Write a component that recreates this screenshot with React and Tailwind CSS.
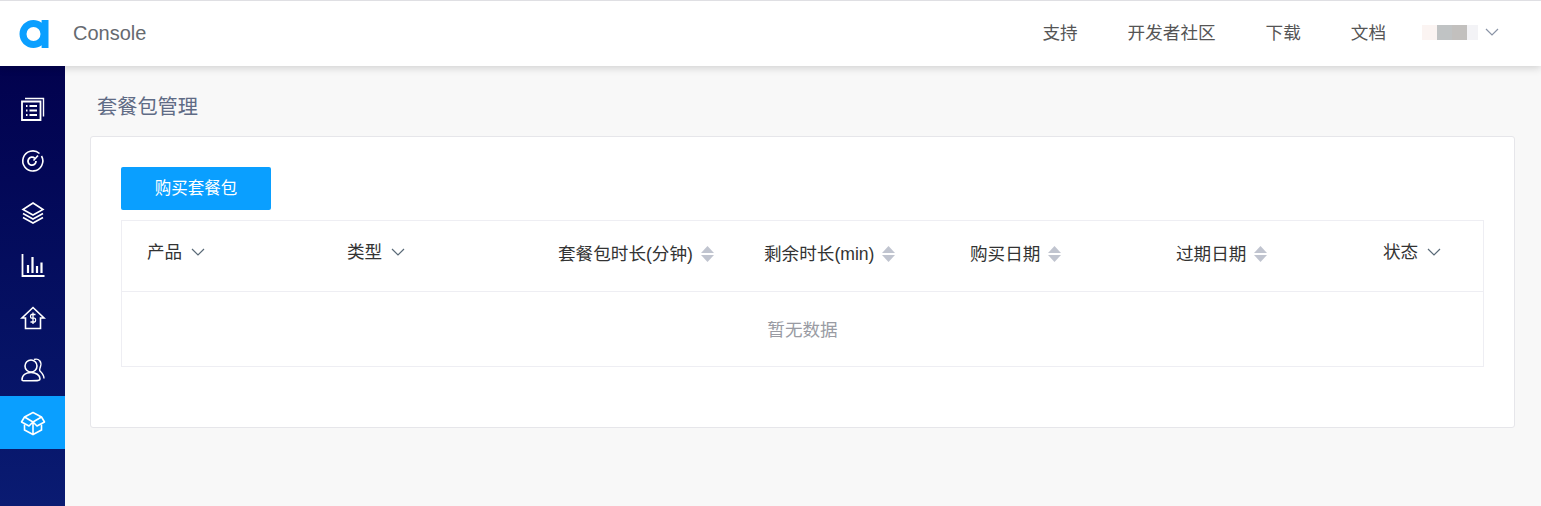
import React from "react";

const font = { fontFamily: '"Liberation Sans", "Noto Sans CJK SC", sans-serif' };

const Logo = () => (
  <svg width="32" height="32" viewBox="0 0 32 32" fill="#0a9fff">
    <path fillRule="evenodd" d="M15.5 3C18.5 3 21.3 4 23.6 5.8V2.9H30.5V31H23.6V28.2C21.3 30 18.5 31 15.5 31 7.8 31 1.5 24.7 1.5 17S7.8 3 15.5 3ZM15.5 10A7 7 0 1 0 15.5 24 7 7 0 1 0 15.5 10Z" />
  </svg>
);

const IconWrap = ({ children }) => (
  <svg width="26" height="26" viewBox="0 0 26 26" fill="none" stroke="white" strokeWidth="1.4">
    {children}
  </svg>
);

const navIcons = [
  <IconWrap key="list">
    <path d="M2 6.5H20.5V25H2Z" strokeWidth="1.8" />
    <path d="M5 3.5H23.5V21.5" />
    <path d="M6 11H7.5M9.5 11H17M6 15.5H7.5M9.5 15.5H17M6 20H7.5M9.5 20H17" strokeWidth="1.8" />
  </IconWrap>,
  <IconWrap key="gauge">
    <path d="M19.5 5.5A10 10 0 1 0 21.5 8" strokeWidth="1.6" />
    <path d="M14.8 10.3A4 4 0 1 0 16 13" strokeWidth="1.8" />
    <path d="M13.5 12.5L18 7.5" strokeWidth="1.6" />
  </IconWrap>,
  <IconWrap key="layers">
    <path d="M13 3L23 9.5 13 15 3 9.5Z" strokeWidth="1.6" />
    <path d="M3 13.5L13 19 23 13.5" strokeWidth="1.6" />
    <path d="M3 17.5L13 23 23 17.5" strokeWidth="1.6" />
  </IconWrap>,
  <IconWrap key="chart">
    <path d="M2.5 2V24H24.5" strokeWidth="1.8" />
    <path d="M8 13V21M12.5 5V21M17 14V21M21.5 10.5V21" strokeWidth="2.2" />
  </IconWrap>,
  <IconWrap key="house">
    <path d="M13 2.5L24 13H20.5V23.5H5.5V13H2L13 2.5Z" strokeWidth="1.6" />
    <path d="M15.5 9.5H11.5C10.2 9.5 10.2 13.2 11.5 13.2H14.5C16 13.2 16 17 14.5 17H10.5M13 7.5V19" strokeWidth="1.3" />
  </IconWrap>,
  <IconWrap key="users">
    <circle cx="11" cy="9" r="6" strokeWidth="1.6" />
    <path d="M2 23C2 18 6 15.5 11 15.5S20 18 20 22C20 23.5 18 23.7 11 23.7 5 23.7 2 24 2 23Z" strokeWidth="1.6" />
    <path d="M14 2.5C19 1 22 5 20.5 9.5 20 11.5 19 12.5 20 14 22 16 24 18 24 21.5" strokeWidth="1.4" />
  </IconWrap>,
  <IconWrap key="box">
    <path d="M13 2.5L21.5 7 24.5 12 17 16 13 12 9 16 1.5 12 4.5 7Z" strokeWidth="1.6" strokeLinejoin="round" />
    <path d="M4.5 7L13 12 21.5 7" strokeWidth="1.6" />
    <path d="M4.5 14.5V20L13 24.5 21.5 20V14.5M13 12V24.5" strokeWidth="1.6" />
  </IconWrap>,
];

const Chevron = ({ color = "#5a6a78" }) => (
  <svg width="14" height="8" viewBox="0 0 14 8" fill="none" stroke={color} strokeWidth="1.2">
    <path d="M1 1L7 7 13 1" />
  </svg>
);

const SortIcon = () => (
  <svg width="13" height="16" viewBox="0 0 13 16" fill="#c0c4cf">
    <path d="M6.5 0L13 7H0Z" />
    <path d="M0 9H13L6.5 16Z" />
  </svg>
);

const columns = [
  { title: "产品", type: "filter", width: "w-[200px]" },
  { title: "类型", type: "filter", width: "w-[211px]" },
  { title: "套餐包时长(分钟)", type: "sort", width: "w-[206px]" },
  { title: "剩余时长(min)", type: "sort", width: "w-[206px]" },
  { title: "购买日期", type: "sort", width: "w-[206px]" },
  { title: "过期日期", type: "sort", width: "w-[207px]" },
  { title: "状态", type: "filter", width: "w-[125px]" },
];

const topLinks = ["支持", "开发者社区", "下载", "文档"];

export default function App() {
  return (
    <div className="h-[506px] overflow-hidden bg-[#f8f8f8] flex flex-col" style={font}>
      {/* header */}
      <header className="relative z-10 h-[66px] shrink-0 border-t border-[#dfdfe3] bg-white shadow-[0_2px_8px_rgba(0,0,0,0.16)] flex items-center">
        <div className="ml-[18px] mb-[1px]">
          <Logo />
        </div>
        <span className="ml-[23px] mb-[1px] text-[20px] text-[#666a70]">Console</span>
        <nav className="ml-auto flex items-center gap-[50px] text-[17.6px] text-[#555]">
          {topLinks.map((link) => (
            <a key={link}>{link}</a>
          ))}
        </nav>
        <div className="ml-[36px] mb-[2px] flex h-[15px] w-[56px]">
          <div className="w-[15px] bg-[#fbf4f2]" />
          <div className="w-[15px] bg-[#c0c3c4]" />
          <div className="w-[15px] bg-[#c2c0be]" />
          <div className="w-[11px] bg-[#f3f3f6]" />
        </div>
        <div className="ml-[7px] mr-[42px] mb-[3px]">
          <Chevron color="#8a94a6" />
        </div>
      </header>

      <div className="flex flex-1 min-h-0">
        {/* sidebar */}
        <aside className="w-[65px] shrink-0 bg-gradient-to-b from-[#02024e] to-[#0a1b72] pt-[16px]">
          {navIcons.map((icon, index) => (
            <div
              key={index}
              className={
                index === 6
                  ? "h-[53px] flex items-center justify-center bg-[#0a9fff]"
                  : "h-[52.4px] flex items-center justify-center"
              }
            >
              {icon}
            </div>
          ))}
        </aside>

        {/* content */}
        <main className="flex-1 pl-[25px] pr-[26px]">
          <h1 className="pl-[7px] pt-[27px] h-[70px] text-[20.2px] leading-[28px] text-[#5f6b85]">套餐包管理</h1>
          <div className="h-[292px] rounded-[3px] border border-[#e6e6ea] bg-white px-[30px] pt-[30px]">
            <button className="h-[43px] w-[150px] rounded-[2px] bg-[#0a9fff] text-[16.5px] text-white">购买套餐包</button>

            {/* table */}
            <div className="mt-[10px] border border-[#eeeef3]">
              <div className="flex h-[71px] border-b border-[#eeeef3] text-[17.6px] text-[#333]">
                {columns.map((col) => (
                  <div key={col.title} className={`${col.width} shrink-0 pl-[25px] flex items-center`}>
                    {col.type === "sort" ? (
                      <div className="flex items-center gap-[8px] mt-[-4px]">
                        <span>{col.title}</span>
                        <SortIcon />
                      </div>
                    ) : (
                      <div className="flex items-center gap-[9px] mt-[-8px]">
                        <span>{col.title}</span>
                        <Chevron />
                      </div>
                    )}
                  </div>
                ))}
              </div>
              <div className="h-[74px] pt-[2px] flex items-center justify-center text-[17.6px] text-[#999ba3]">暂无数据</div>
            </div>
          </div>
        </main>
      </div>
    </div>
  );
}
